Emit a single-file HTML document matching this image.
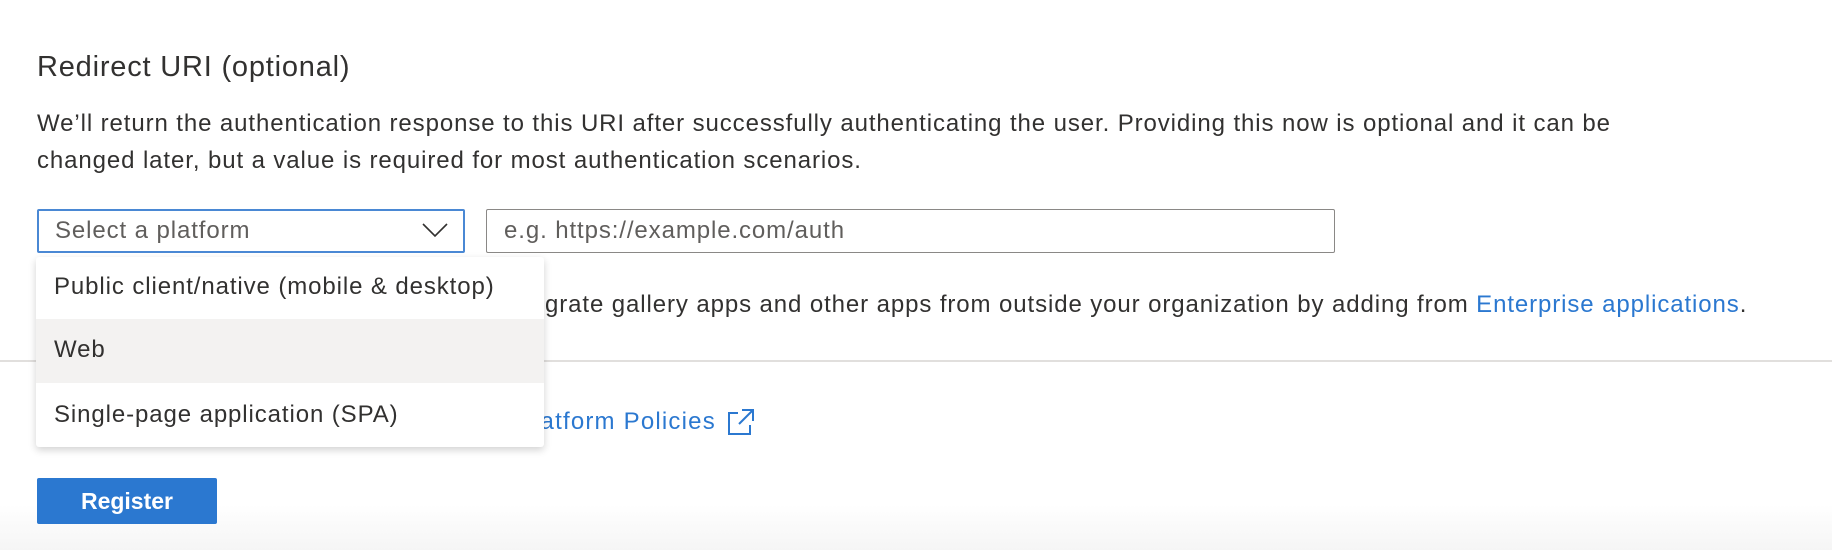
<!DOCTYPE html>
<html><head><style>
body{margin:0;width:1832px;height:550px;position:relative;overflow:hidden;background:#fff;font-family:"Liberation Sans",sans-serif;color:#323130}
.a{position:absolute;white-space:nowrap}
.t{font-size:24px;letter-spacing:0.9px}
</style></head><body>
<div style="position:absolute;left:0;top:505px;width:1832px;height:45px;background:linear-gradient(#fff,#f5f5f5)"></div>
<div class="a" style="left:37px;top:51px;font-size:29px;letter-spacing:0.8px">Redirect URI (optional)</div>
<div class="a t" style="left:37px;top:105px;line-height:37px">We’ll return the authentication response to this URI after successfully authenticating the user. Providing this now is optional and it can be<br>changed later, but a value is required for most authentication scenarios.</div>
<div class="a" style="left:37px;top:209px;width:424px;height:40px;border:2px solid #4a88d4;border-radius:2px"></div>
<div class="a t" style="left:55px;top:217px;color:#605e5c">Select a platform</div>
<svg class="a" style="left:422px;top:223px" width="26" height="15" viewBox="0 0 26 15"><path d="M1 1 L13 13 L25 1" fill="none" stroke="#323130" stroke-width="1.6"/></svg>
<div class="a" style="left:486px;top:209px;width:847px;height:42px;border:1px solid #8a8886;border-radius:2px"></div>
<div class="a t" style="left:504px;top:217px;color:#605e5c">e.g. https://example.com/auth</div>
<div class="a t" style="left:545px;top:291px">grate gallery apps and other apps from outside your organization by adding from <span style="color:#2b78d0">Enterprise applications</span>.</div>
<div class="a" style="left:0;top:360px;width:1832px;height:2px;background:#e1dfdd"></div>
<div class="a" style="left:534px;top:408px;font-size:24px;letter-spacing:1.2px;color:#2b78d0">latform Policies</div>
<svg class="a" style="left:727px;top:408px" width="28" height="28" viewBox="0 0 28 28"><path d="M11 5 H2 V26 H23 V17 M15 2 H26 V13 M26 2 L12 16" fill="none" stroke="#2b78d0" stroke-width="2"/></svg>
<div class="a" style="left:36px;top:257px;width:508px;height:190px;background:#fff;border-radius:3px;box-shadow:0 3px 8px rgba(0,0,0,0.18)">
<div style="position:absolute;left:0;top:62px;width:508px;height:64px;background:#f3f2f1"></div>
<div class="a t" style="left:18px;top:16px">Public client/native (mobile &amp; desktop)</div>
<div class="a t" style="left:18px;top:79px">Web</div>
<div class="a t" style="left:18px;top:144px">Single-page application (SPA)</div>
</div>
<div class="a" style="left:37px;top:478px;width:180px;height:46px;background:#2b78d0;border-radius:2px;color:#fff;font-weight:bold;font-size:23px;text-align:center;line-height:46px">Register</div>
</body></html>
